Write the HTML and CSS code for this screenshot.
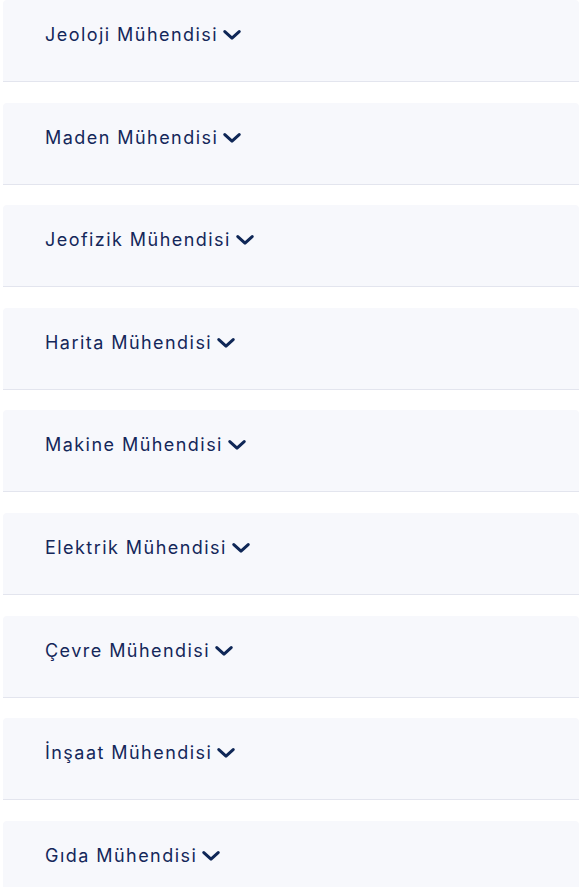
FILE: index.html
```html
<!DOCTYPE html>
<html lang="tr">
<head>
<meta charset="utf-8">
<title>Mühendislik</title>
<link rel="stylesheet" href="styles.css">
</head>
<body>
<div class="list">
  <div class="item"><button class="head"><span>Jeoloji Mühendisi</span><svg class="chev" viewBox="0 0 18 10"><path d="M1.8 1.6 9 8.2l7.2-6.6"/></svg></button></div>
  <div class="item"><button class="head"><span>Maden Mühendisi</span><svg class="chev" viewBox="0 0 18 10"><path d="M1.8 1.6 9 8.2l7.2-6.6"/></svg></button></div>
  <div class="item"><button class="head"><span>Jeofizik Mühendisi</span><svg class="chev" viewBox="0 0 18 10"><path d="M1.8 1.6 9 8.2l7.2-6.6"/></svg></button></div>
  <div class="item"><button class="head"><span>Harita Mühendisi</span><svg class="chev" viewBox="0 0 18 10"><path d="M1.8 1.6 9 8.2l7.2-6.6"/></svg></button></div>
  <div class="item"><button class="head"><span>Makine Mühendisi</span><svg class="chev" viewBox="0 0 18 10"><path d="M1.8 1.6 9 8.2l7.2-6.6"/></svg></button></div>
  <div class="item"><button class="head"><span>Elektrik Mühendisi</span><svg class="chev" viewBox="0 0 18 10"><path d="M1.8 1.6 9 8.2l7.2-6.6"/></svg></button></div>
  <div class="item"><button class="head"><span>Çevre Mühendisi</span><svg class="chev" viewBox="0 0 18 10"><path d="M1.8 1.6 9 8.2l7.2-6.6"/></svg></button></div>
  <div class="item"><button class="head"><span>İnşaat Mühendisi</span><svg class="chev" viewBox="0 0 18 10"><path d="M1.8 1.6 9 8.2l7.2-6.6"/></svg></button></div>
  <div class="item"><button class="head"><span>Gıda Mühendisi</span><svg class="chev" viewBox="0 0 18 10"><path d="M1.8 1.6 9 8.2l7.2-6.6"/></svg></button></div>
</div>
</body>
</html>
```
FILE: styles.css
```css
html, body {
  margin: 0;
  padding: 0;
  background: #ffffff;
}
body {
  font-family: Inter, "Noto Sans", sans-serif;
  overflow: hidden;
}
.list {
  padding-left: 3px;
  display: flex;
  flex-direction: column;
  gap: 20.6px;
}
.item {
  background: #f7f8fc;
  border-bottom: 1px solid #e3e5ee;
  border-radius: 4px 4px 0 0;
  height: 81px;
}
.head {
  display: flex;
  align-items: center;
  gap: 5px;
  background: none;
  border: 0;
  padding: 23px 0 0 42px;
  margin: 0;
  font-family: inherit;
  font-size: 18px;
  font-weight: 400;
  letter-spacing: 1.45px;
  line-height: 24px;
  color: #14275a;
  cursor: pointer;
}
.chev {
  width: 18px;
  height: 10px;
  fill: none;
  stroke: #0f2757;
  stroke-width: 3;
  stroke-linecap: round;
  stroke-linejoin: round;
}
```
